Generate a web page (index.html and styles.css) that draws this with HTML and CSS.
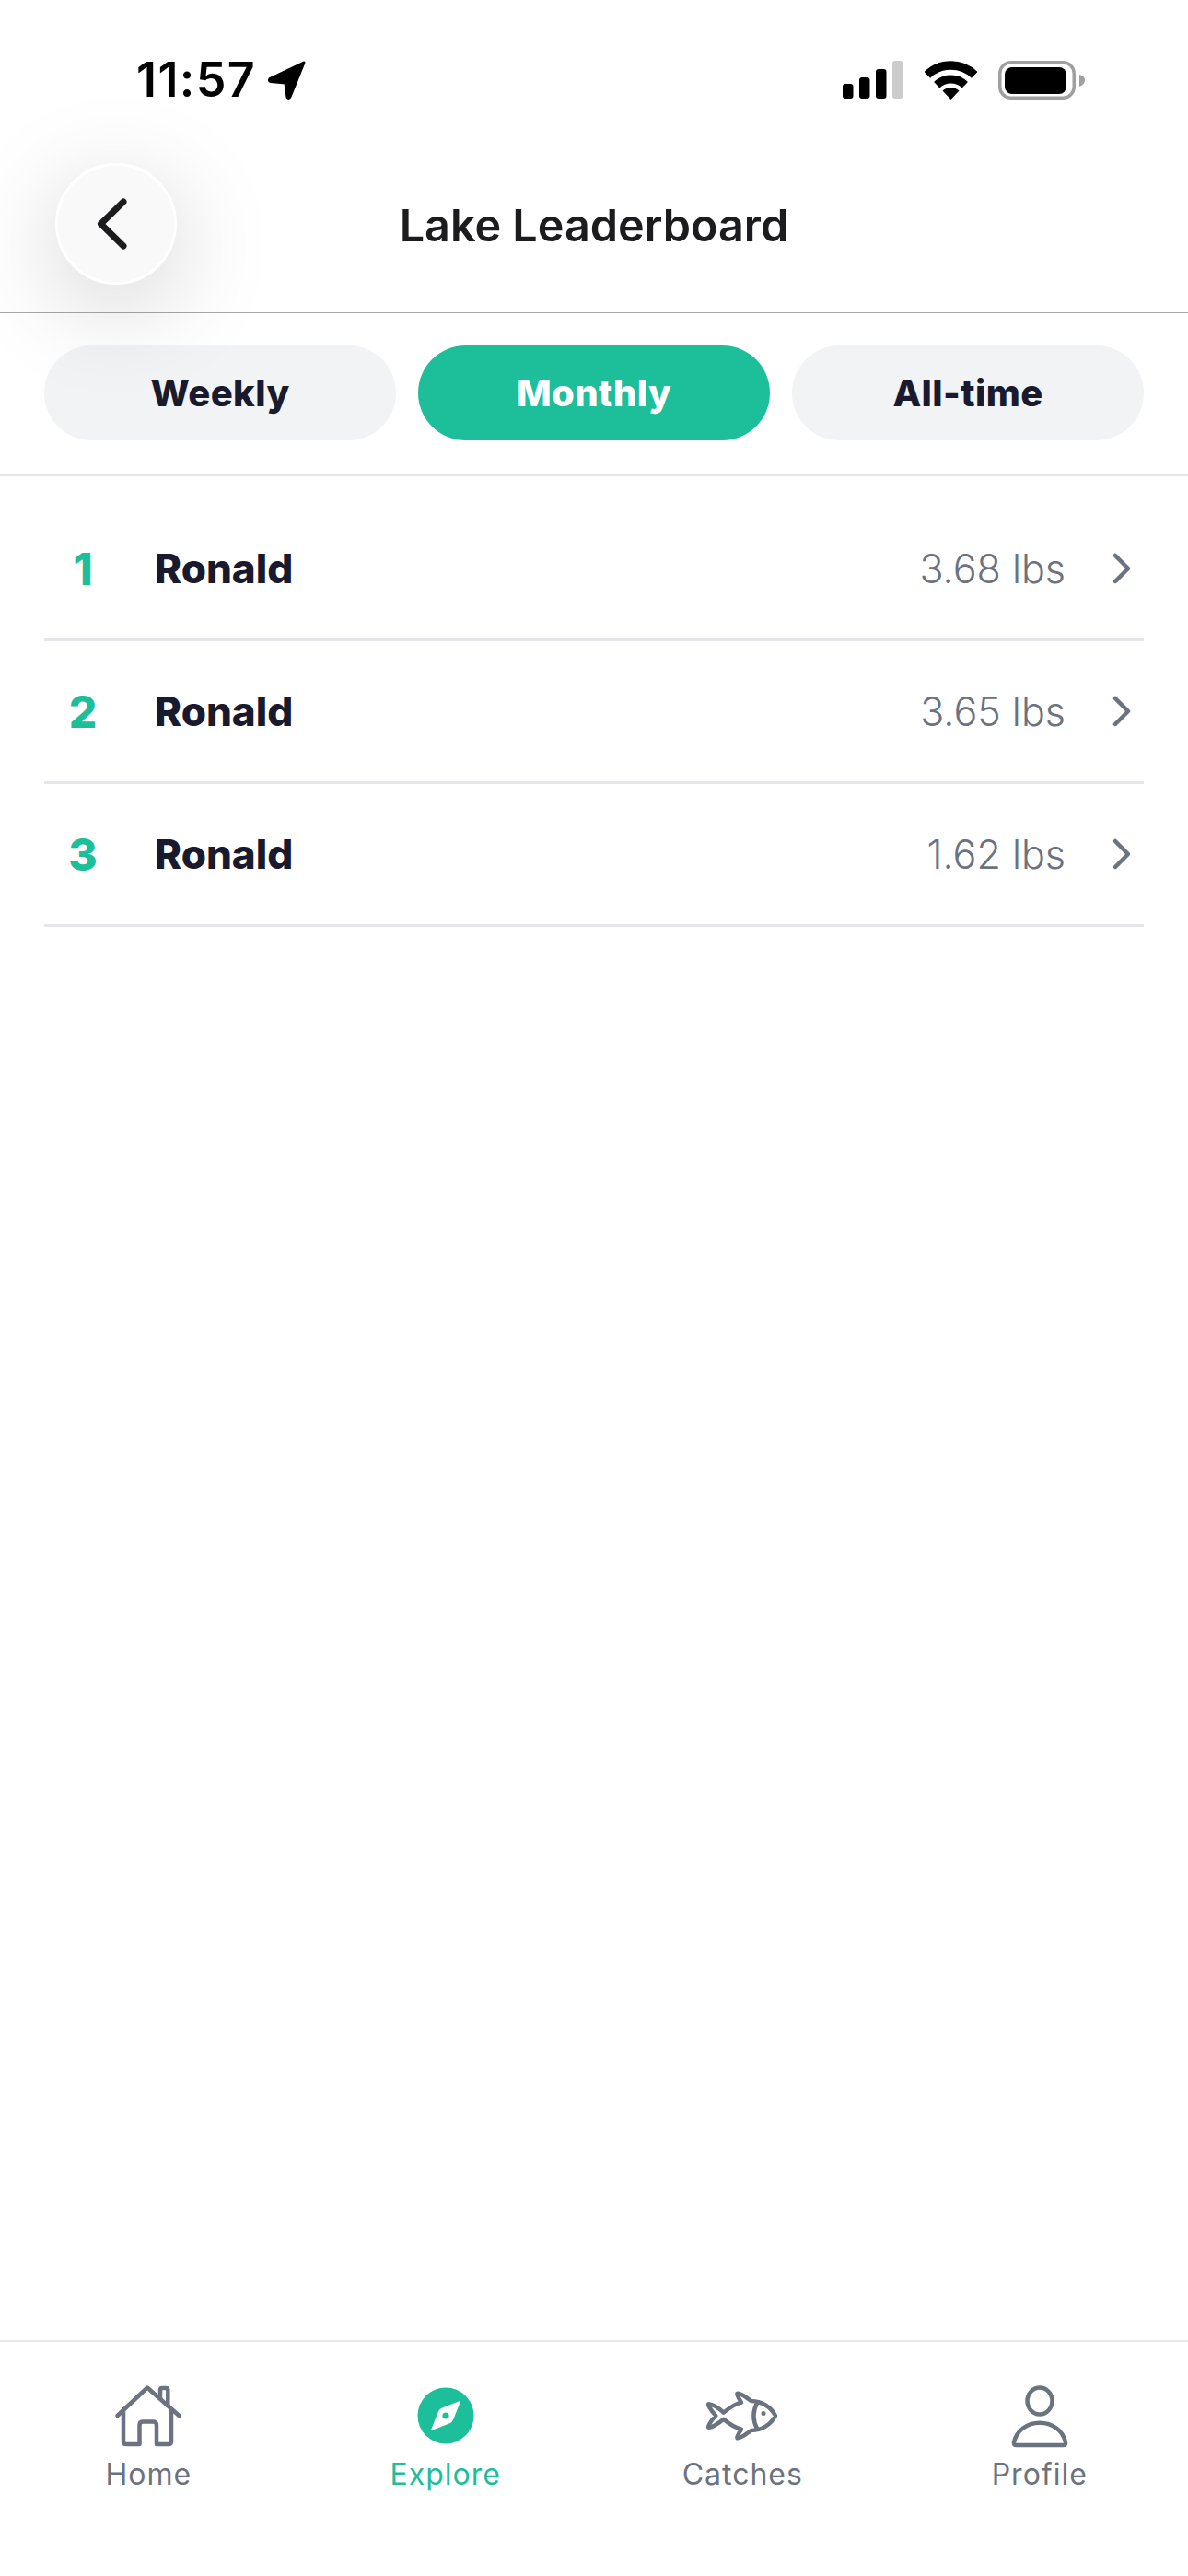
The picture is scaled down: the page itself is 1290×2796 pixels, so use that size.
FILE: index.html
```html
<!DOCTYPE html>
<html lang="en">
<head>
<meta charset="utf-8">
<title>Lake Leaderboard</title>
<link rel="stylesheet" href="styles.css">
</head>
<body>
<div class="screen">
  <div class="status">
    <div class="status-left">
      <span class="time">11:57</span>
      <svg class="loc" width="44" height="44" viewBox="0 0 44 44"><path d="M41 3 L4 20.5 Q2.5 23 5 23.5 L21 25 L23 40.5 Q24.5 42.5 26 40 Z" fill="#000" stroke="#000" stroke-width="3" stroke-linejoin="round"/></svg>
    </div>
    <div class="status-right">
      <svg width="66" height="42" viewBox="0 0 66 42"><rect x="0" y="25" width="11.5" height="16" rx="3" fill="#000"/><rect x="18" y="18" width="11.5" height="23" rx="3" fill="#000"/><rect x="36" y="9" width="11.5" height="32" rx="3" fill="#000"/><rect x="54" y="0" width="11.5" height="41" rx="3" fill="#ccc"/></svg>
      <svg width="57" height="42" viewBox="0 0 57 42"><path d="M2.8 15.4 A37 37 0 0 1 54.2 15.4" fill="none" stroke="#000" stroke-width="9.5"/><path d="M13.2 26.2 A22 22 0 0 1 43.8 26.2" fill="none" stroke="#000" stroke-width="9"/><path d="M28.5 42 L19.5 32.6 A13 13 0 0 1 37.5 32.6 Z" fill="#000"/></svg>
      <svg width="94" height="42" viewBox="0 0 94 42"><rect x="1.75" y="1.75" width="80.5" height="38.5" rx="12" fill="none" stroke="#a0a0a0" stroke-width="3.5"/><rect x="7" y="7" width="67" height="29" rx="8" fill="#000"/><path d="M88 15 Q94 16.5 94 21 Q94 25.5 88 28 Z" fill="#a0a0a0"/></svg>
    </div>
  </div>
  <header class="header">
    <div class="header-side">
      <button class="back" type="button" aria-label="Back">
        <svg width="36" height="60" viewBox="0 0 36 60"><path d="M30 6 L5.5 30 L30 54" fill="none" stroke="#1c1c1e" stroke-width="7" stroke-linecap="round" stroke-linejoin="round"/></svg>
      </button>
    </div>
    <h1 class="title">Lake Leaderboard</h1>
    <div class="header-side"></div>
  </header>
  <nav class="tabs">
    <div class="tab">Weekly</div>
    <div class="tab tab-active">Monthly</div>
    <div class="tab">All-time</div>
  </nav>
  <main class="list">
    <div class="row">
      <span class="rank">1</span><span class="name">Ronald</span><span class="weight">3.68 lbs</span>
      <svg class="chev" width="24" height="36" viewBox="0 0 24 36"><path d="M5 4 L19 18 L5 32" fill="none" stroke="#6b7280" stroke-width="4.5" stroke-linecap="round" stroke-linejoin="round"/></svg>
    </div>
    <div class="row">
      <span class="rank">2</span><span class="name">Ronald</span><span class="weight">3.65 lbs</span>
      <svg class="chev" width="24" height="36" viewBox="0 0 24 36"><path d="M5 4 L19 18 L5 32" fill="none" stroke="#6b7280" stroke-width="4.5" stroke-linecap="round" stroke-linejoin="round"/></svg>
    </div>
    <div class="row">
      <span class="rank">3</span><span class="name">Ronald</span><span class="weight">1.62 lbs</span>
      <svg class="chev" width="24" height="36" viewBox="0 0 24 36"><path d="M5 4 L19 18 L5 32" fill="none" stroke="#6b7280" stroke-width="4.5" stroke-linecap="round" stroke-linejoin="round"/></svg>
    </div>
  </main>
  <footer class="tabbar">
    <div class="item">
      <svg class="ico" width="74" height="70" viewBox="0 0 74 70"><g fill="none" stroke="#6b7280" stroke-width="4.5" stroke-linecap="round" stroke-linejoin="round"><path d="M3.5 34 L36 3.5 L70.5 34"/><path d="M10 27 V62 Q10 65 13 65 H27.5 V44 Q27.5 40.5 31.5 40.5 H42 Q46 40.5 46 44 V65 H59 Q62 65 62 62 V27"/><path d="M50 15 V6 Q50 4 52 4 H56.3 Q58.3 4 58.3 6 V23"/></g></svg>
      <span class="label">Home</span>
    </div>
    <div class="item item-active">
      <svg class="ico" width="74" height="70" viewBox="0 0 74 70"><circle cx="37" cy="34" r="30.5" fill="#1dbe9a"/><path d="M52 19 L33 26.5 Q30.5 27.5 29.5 30 L22 49 L41 41.5 Q43.5 40.5 44.5 38 Z" fill="#fff" stroke="#fff" stroke-width="1.5" stroke-linejoin="round"/><circle cx="37" cy="34" r="3.6" fill="#1dbe9a"/></svg>
      <span class="label">Explore</span>
    </div>
    <div class="item">
      <svg class="ico" width="80" height="70" viewBox="0 0 80 70"><g transform="translate(0 7.3)" fill="none" stroke="#6b7280" stroke-width="4.5" stroke-linecap="round" stroke-linejoin="round"><path d="M76 26.7 C71 17 61 11 49.7 10.7 C45 7.5 40 3 35 2.5 C33.5 2.5 35 6 39 12.3 C31 14 25 19 19.7 23.3 C15 19 8 14.5 3.5 14 C2 14 5 20 11.3 26.7 C5 33 2 39.5 3.5 39.5 C8 39 15 34.5 19.7 30.5 C25 35 31 39.5 39 41.3 C35 47.5 33.5 51 35 51 C40 50.5 45 46 49.7 42.7 C61 42.5 71 36.5 76 26.7 Z"/><path d="M56.3 12.3 Q48.5 26.7 56.3 41.3"/></g><circle cx="63" cy="31.6" r="2.5" fill="#6b7280"/></svg>
      <span class="label">Catches</span>
    </div>
    <div class="item">
      <svg class="ico" width="74" height="70" viewBox="0 0 74 70"><g fill="none" stroke="#6b7280" stroke-width="4.5" stroke-linecap="round" stroke-linejoin="round"><ellipse cx="37" cy="18" rx="13.5" ry="14.5"/><path d="M11.5 66 H62.5 Q65.5 66 65 63 C62.5 50 50.5 41.7 37 41.7 C23.5 41.7 11.5 50 9 63 Q8.5 66 11.5 66 Z"/></g></svg>
      <span class="label">Profile</span>
    </div>
  </footer>
</div>
</body>
</html>
```
FILE: styles.css
```css
* { box-sizing: border-box; }
html, body { margin: 0; padding: 0; background: #fff; }
.screen {
  width: 1290px;
  height: 2796px;
  display: flex;
  flex-direction: column;
  overflow: hidden;
  font-family: "Inter", "Liberation Sans", sans-serif;
}
.status {
  height: 174px;
  display: flex;
  align-items: center;
  justify-content: space-between;
  padding: 0 112px 0 148px;
}
.status-left { display: flex; align-items: center; gap: 11px; }
.time { font-size: 52px; font-weight: 600; color: #000; letter-spacing: 1.4px; line-height: 60px; }
.loc { display: block; }
.status-right { display: flex; align-items: center; gap: 23px; }
.status-right svg { display: block; }
.header {
  position: relative;
  z-index: 1;
  display: grid;
  grid-template-columns: 1fr auto 1fr;
  align-items: center;
  padding: 3px 0 30px;
  border-bottom: 1px solid #a8a8a8;
}
.header-side { display: flex; padding-left: 60px; }
.back {
  width: 132px;
  height: 132px;
  border-radius: 50%;
  border: 3px solid #fff;
  background: #f9f9f9;
  box-shadow: 0 24px 110px rgba(0, 0, 0, 0.18);
  display: flex;
  align-items: center;
  justify-content: center;
  padding: 0 8px 0 0;
}
.title { margin: 0; padding-top: 3px; font-size: 48.5px; font-weight: 600; color: #1c1c1e; line-height: 60px; }
.tabs {
  display: grid;
  grid-template-columns: repeat(3, 1fr);
  gap: 24px;
  padding: 35px 48px 36px;
  border-bottom: 3px solid #e5e5ea;
}
.tab {
  height: 103px;
  border-radius: 52px;
  background: #f2f3f5;
  color: #1a1a2e;
  font-size: 40px;
  font-weight: 800;
  letter-spacing: 0.4px;
  display: flex;
  align-items: center;
  justify-content: center;
}
.tab-active { background: #1dbe9a; color: #fff; }
.list { flex: 1; padding: 24px 48px 0; }
.row {
  height: 155px;
  display: flex;
  align-items: center;
  border-bottom: 3px solid #e5e5ea;
}
.rank { width: 84px; text-align: center; color: #1dbe9a; font-size: 48px; font-weight: 800; }
.name { margin-left: 36px; color: #1a1a2e; font-size: 44px; font-weight: 800; }
.weight { margin-left: auto; color: #6b7280; font-size: 43px; font-weight: 300; }
.chev { display: block; margin: 0 12px 0 49px; }
.tabbar {
  height: 256px;
  border-top: 2px solid #e8e8e8;
  display: grid;
  grid-template-columns: repeat(4, 1fr);
  padding-top: 46px;
  align-items: start;
}
.item { display: flex; flex-direction: column; align-items: center; gap: 8px; }
.ico { display: block; }
.label { font-size: 32px; font-weight: 400; color: #6b7280; line-height: 40px; letter-spacing: 1px; }
.item-active .label { color: #1dbe9a; }
```
